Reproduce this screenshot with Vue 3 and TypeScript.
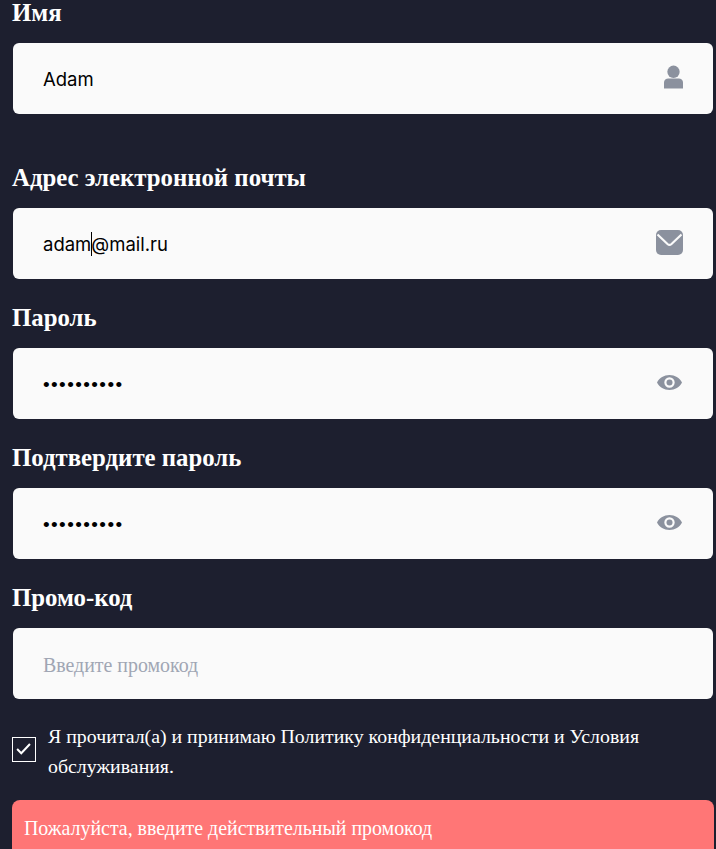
<script setup lang="ts">
interface Field {
  label: string
  type: string
  value: string
  placeholder?: string
  icon?: 'user' | 'mail' | 'eye'
  caret?: boolean
}

const fields: Field[] = [
  { label: 'Имя', type: 'text', value: 'Adam', icon: 'user' },
  { label: 'Адрес электронной почты', type: 'email', value: 'adam@mail.ru', icon: 'mail', caret: true },
  { label: 'Пароль', type: 'password', value: 'qwerty1234', icon: 'eye' },
  { label: 'Подтвердите пароль', type: 'password', value: 'qwerty1234', icon: 'eye' },
  { label: 'Промо-код', type: 'text', value: '', placeholder: 'Введите промокод' },
]
</script>

<template>
  <form class="form" @submit.prevent>
    <div v-for="f in fields" :key="f.label" class="field">
      <label class="label">{{ f.label }}</label>
      <div class="control">
        <input class="input" :type="f.type" :value="f.value" :placeholder="f.placeholder" />
        <span v-if="f.caret" class="caret"></span>
        <svg v-if="f.icon === 'user'" class="icon user" viewBox="0 0 20 24" width="19" height="24">
          <circle cx="10" cy="6.500" r="6.500" />
          <path d="M0 24v-6.500C0 15 2.200 13.500 4.500 13.500h11c2.300 0 4.500 1.500 4.500 4V24z" />
        </svg>
        <svg v-else-if="f.icon === 'mail'" class="icon mail" viewBox="0 0 27 25" width="27" height="25">
          <rect width="27" height="25" rx="5" />
          <path d="M1.500 4.500l10 9.500q2 1.800 4 0l10-9.500" fill="none" stroke="#fafafa" stroke-width="2.200" />
        </svg>
        <svg v-else-if="f.icon === 'eye'" class="icon eye" viewBox="0 0 25 15" width="25" height="15">
          <path fill-rule="evenodd" d="M0 7.500C2.500 2.800 7 0 12.500 0S22.500 2.800 25 7.500C22.500 12.200 18 15 12.500 15S2.500 12.200 0 7.500zM12.500 2.300a5.200 5.200 0 1 0 0 10.400 5.200 5.200 0 0 0 0-10.400z" />
          <circle cx="12.500" cy="7.500" r="3" />
        </svg>
      </div>
    </div>

    <label class="agree">
      <span class="box">
        <svg viewBox="0 0 24 25" width="23" height="24">
          <path d="M4.500 11.500l4.500 4.500 9.500-10" fill="none" stroke="#fff" stroke-width="2.200" />
        </svg>
      </span>
      <span class="agree-text">Я прочитал(а) и принимаю Политику конфиденциальности и Условия обслуживания.</span>
    </label>

    <div class="alert">Пожалуйста, введите действительный промокод</div>
  </form>
</template>

<style>
html, body {
  margin: 0;
  background: #1d1f2f;
  overflow: hidden;
}
</style>

<style scoped>
.form {
  box-sizing: border-box;
  width: 716px;
  height: 849px;
  overflow: hidden;
  padding: 0 2px 0 12px;
  font-family: "Liberation Serif", serif;
  color: #fff;
  display: flex;
  flex-direction: column;
}
.field {
  display: flex;
  flex-direction: column;
  margin-bottom: 22px;
}
.field:first-child {
  margin-bottom: 47px;
}
.label {
  font-size: 24.800px;
  font-weight: 700;
  line-height: 33px;
  margin-bottom: 14px;
}
.field:first-child .label {
  margin-top: -4px;
}
.control {
  position: relative;
  margin: 0 1px;
}
.input {
  display: block;
  box-sizing: border-box;
  width: 100%;
  height: 71px;
  border: 0;
  border-radius: 6px;
  padding: 0 70px 0 30px;
  background: #fafafa;
  color: #000;
  font-family: Inter, sans-serif;
  font-size: 18.500px;
  outline: none;
}
.input[type="password"] {
  padding-top: 2px;
  font-family: "Liberation Sans", sans-serif;
  font-size: 19px;
  letter-spacing: 1.400px;
}
.input::placeholder {
  color: #a0a6b4;
  font-family: "Liberation Serif", serif;
  font-size: 19.900px;
  opacity: 1;
}
.input:placeholder-shown {
  padding-top: 2px;
}
.caret {
  position: absolute;
  left: 78px;
  top: 24px;
  height: 24px;
  border-left: 1px solid #000;
}
.icon {
  position: absolute;
  fill: #8b919e;
}
.user { right: 30px; top: 22px; }
.mail { right: 30px; top: 22px; }
.eye { right: 31px; top: 27px; }
.agree {
  display: flex;
  align-items: flex-start;
  gap: 12px;
  margin-bottom: 19px;
}
.box {
  box-sizing: border-box;
  flex: none;
  width: 24px;
  height: 25px;
  margin-top: 16px;
  border: 1px solid #fff;
  display: flex;
}
.agree-text {
  font-size: 19.850px;
  line-height: 30px;
}
.alert {
  flex: none;
  padding: 15px 12px;
  border-radius: 8px;
  background: #ff7676;
  font-size: 19.900px;
  line-height: 27px;
}
</style>
